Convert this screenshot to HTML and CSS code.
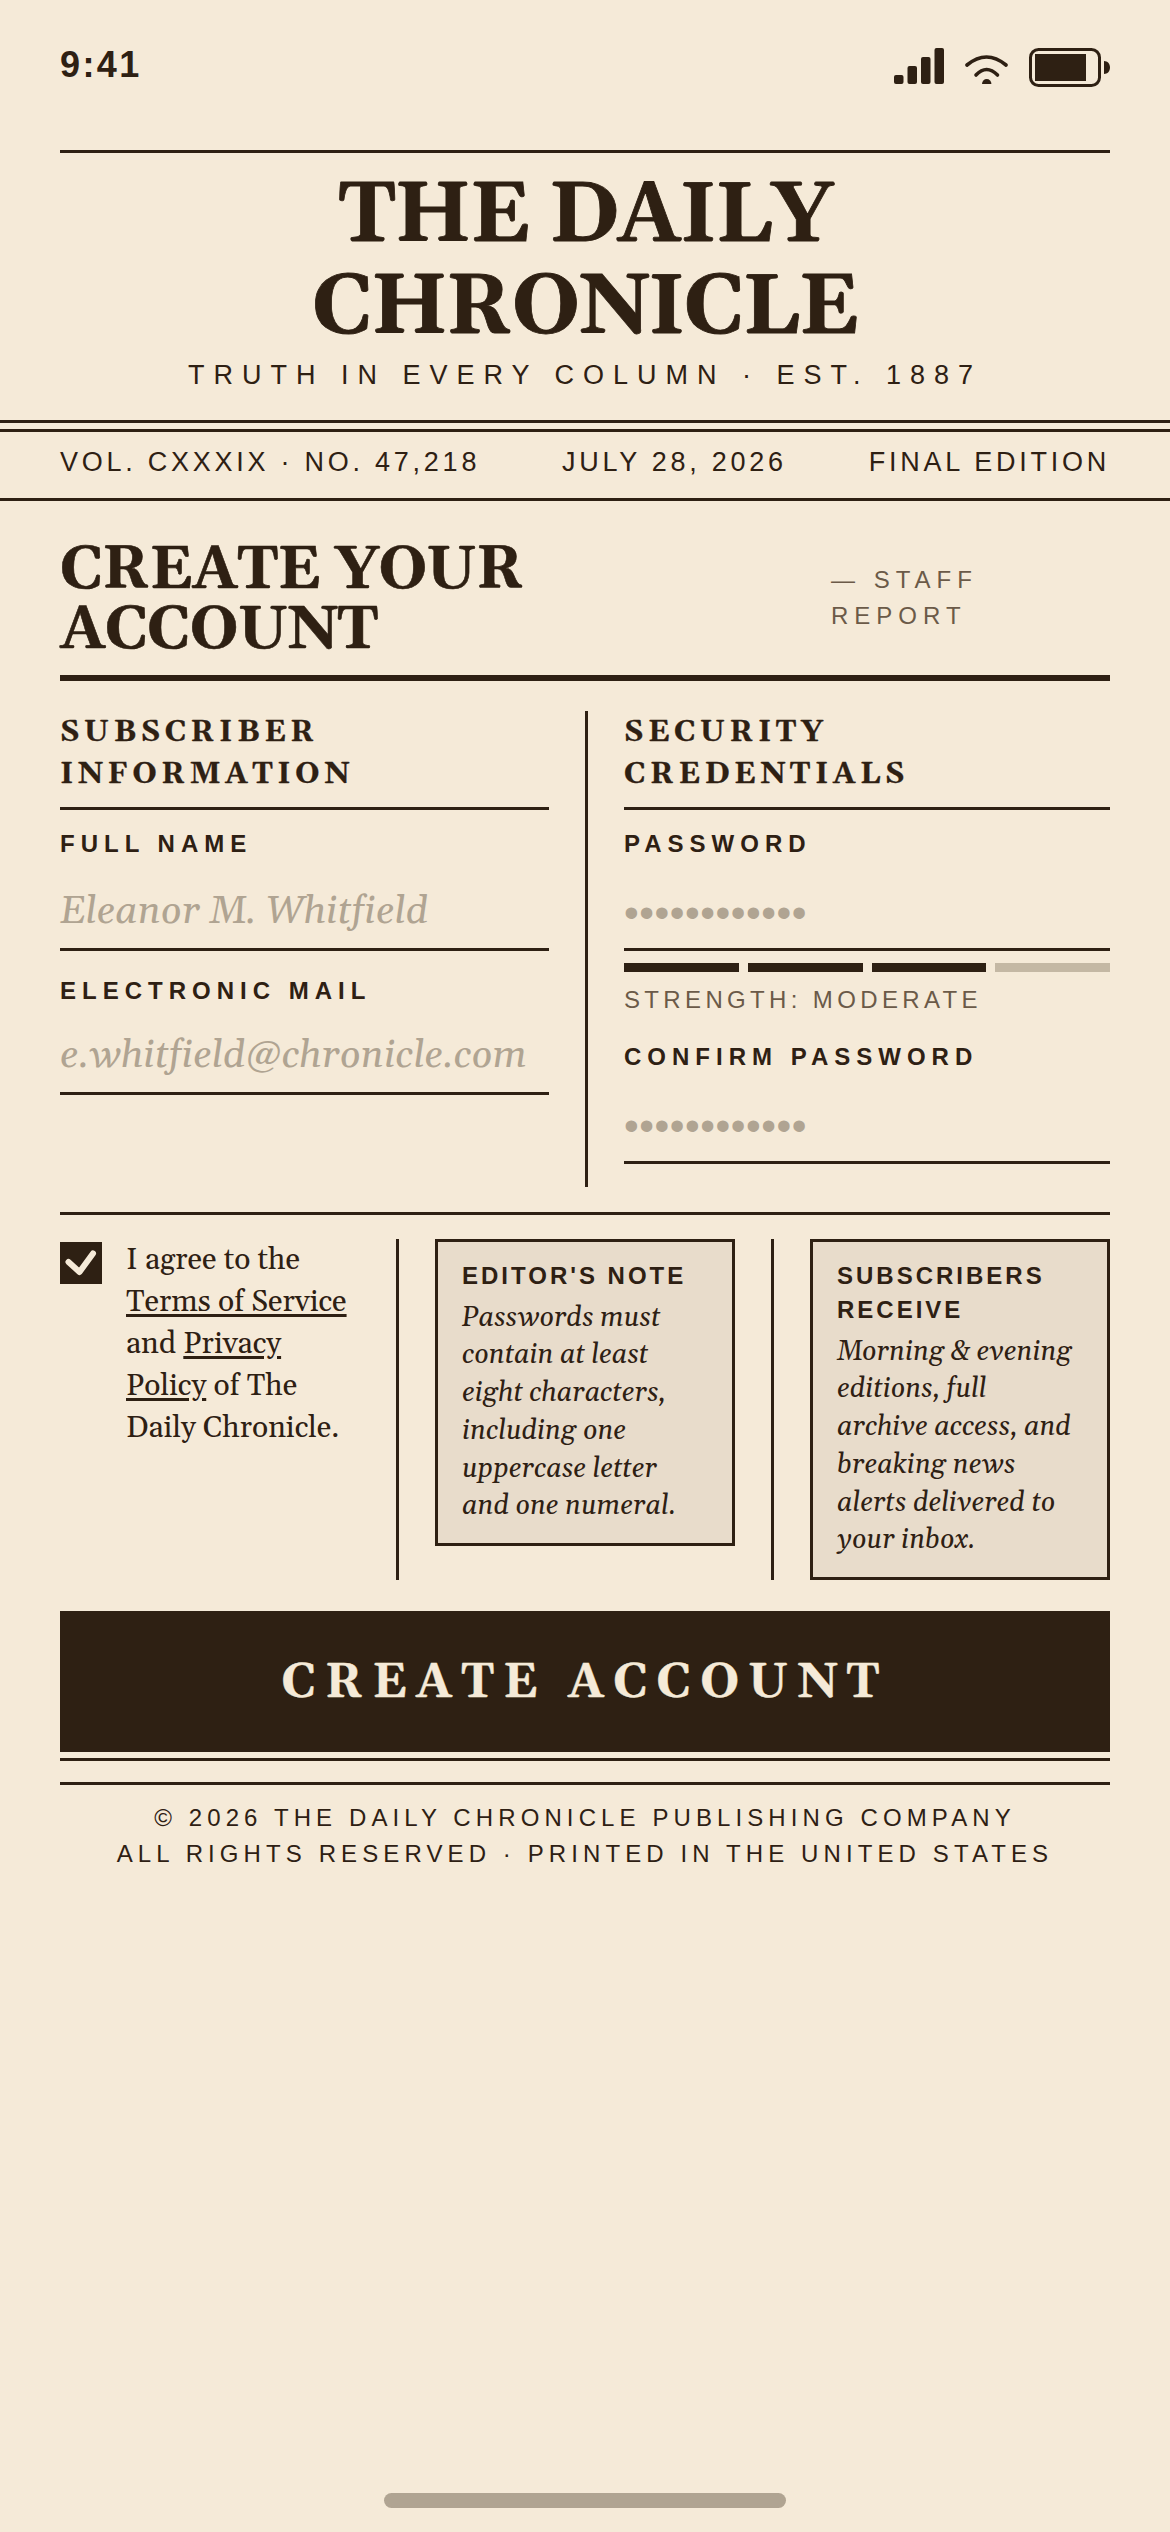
FILE: index.html
```html
<!DOCTYPE html>
<html lang="en">
<head>
<meta charset="utf-8">
<title>The Daily Chronicle</title>
<link rel="stylesheet" href="styles.css">
</head>
<body>
<div class="page">
  <div class="status">
    <span class="time">9:41</span>
    <div class="status-icons">
      <svg class="ic-signal" width="51" height="36" viewBox="0 0 51 36"><rect x="0" y="27" width="9.500" height="9" rx="2"/><rect x="13.500" y="18" width="9.500" height="18" rx="2"/><rect x="27" y="9" width="9.500" height="27" rx="2"/><rect x="40.500" y="0" width="9.500" height="36" rx="2"/></svg>
      <svg class="ic-wifi" width="43" height="30" viewBox="0 0 43 30"><path class="arc" d="M2 10Q21.500 -6 41 10"/><path class="arc" d="M11 20Q21.500 9 32.500 20"/><path d="M17 29a4.700 5 0 0 1 9.400 0z"/></svg>
      <svg class="ic-batt" width="81" height="39" viewBox="0 0 81 39"><rect class="shell" x="1.500" y="1.500" width="69" height="36" rx="8"/><rect x="6" y="6" width="51" height="27"/><path d="M75 13c3.500 0 6 2.800 6 6.500s-2.500 6.500-6 6.500z"/></svg>
    </div>
  </div>

  <div class="masthead-band">
    <header class="masthead">
      <h1 class="title">THE DAILY CHRONICLE</h1>
      <p class="tagline">TRUTH IN EVERY COLUMN · EST. 1887</p>
    </header>
  </div>

  <div class="dateline">
    <span>VOL. CXXXIX · NO. 47,218</span>
    <span>JULY 28, 2026</span>
    <span>FINAL EDITION</span>
  </div>

  <main class="content">
    <div class="headline">
      <h2 class="headline-title">CREATE YOUR ACCOUNT</h2>
      <p class="headline-by">— STAFF REPORT</p>
    </div>

    <div class="form-grid">
      <section class="form-col">
        <h3 class="section-title">SUBSCRIBER INFORMATION</h3>
        <div class="field">
          <label class="label">FULL NAME</label>
          <div class="input input-text">Eleanor M. Whitfield</div>
        </div>
        <div class="field">
          <label class="label">ELECTRONIC MAIL</label>
          <div class="input input-text input-short">e.whitfield@chronicle.com</div>
        </div>
      </section>
      <div class="vline"></div>
      <section class="form-col form-col-last">
        <h3 class="section-title">SECURITY CREDENTIALS</h3>
        <div class="field">
          <label class="label">PASSWORD</label>
          <div class="input input-dots">••••••••••••</div>
          <div class="strength">
            <span class="seg"></span><span class="seg"></span><span class="seg"></span><span class="seg seg-off"></span>
          </div>
          <p class="strength-text">STRENGTH: MODERATE</p>
        </div>
        <div class="field">
          <label class="label">CONFIRM PASSWORD</label>
          <div class="input input-dots">••••••••••••</div>
        </div>
      </section>
    </div>

    <div class="lower">
      <div class="agree">
        <span class="check"><svg width="42" height="42" viewBox="0 0 42 42"><path d="M8.500 20L19.500 30L33 11.500"/></svg></span>
        <p class="agree-text">I agree to the <a href="#">Terms of Service</a> and <a href="#">Privacy Policy</a> of The Daily Chronicle.</p>
      </div>
      <div class="vline"></div>
      <aside class="note">
        <h4 class="note-title">EDITOR'S NOTE</h4>
        <p class="note-body">Passwords must contain at least eight characters, including one uppercase letter and one numeral.</p>
      </aside>
      <div class="vline"></div>
      <aside class="note">
        <h4 class="note-title">SUBSCRIBERS RECEIVE</h4>
        <p class="note-body">Morning &amp; evening editions, full archive access, and breaking news alerts delivered to your inbox.</p>
      </aside>
    </div>

    <button class="submit" type="button">CREATE ACCOUNT</button>

    <footer class="footer">
      <div class="footer-text">
        <p>© 2026 THE DAILY CHRONICLE PUBLISHING COMPANY</p>
        <p>ALL RIGHTS RESERVED · PRINTED IN THE UNITED STATES</p>
      </div>
    </footer>
  </main>

  <div class="home-indicator"></div>
</div>
</body>
</html>
```
FILE: styles.css
```css
* { box-sizing: border-box; }
html, body { margin: 0; padding: 0; }
body { background: #f5ead8; color: #2e2013; font-family: "Liberation Sans", Arial, sans-serif; }
h1, h2, h3, h4, p { margin: 0; font-weight: inherit; }

.page { width: 1170px; height: 2532px; background: #f5ead8; position: relative; overflow: hidden; }

.status { height: 150px; padding: 48px 60px 0; display: flex; justify-content: space-between; align-items: flex-start; }
.time { font-size: 36px; font-weight: 700; line-height: 33px; letter-spacing: 2.4px; }
.status-icons { display: flex; align-items: flex-start; gap: 20px; }
.status-icons svg { display: block; fill: #2e2013; }
.ic-wifi { margin-top: 7px; margin-right: 1px; }
.ic-wifi .arc { fill: none; stroke: #2e2013; stroke-width: 3.6; stroke-linecap: round; }
.ic-batt .shell { fill: none; stroke: #2e2013; stroke-width: 3; }

.masthead-band { border-bottom: 3px solid #2e2013; }
.masthead { margin: 0 60px; border-top: 3px solid #2e2013; padding-top: 18px; text-align: center; height: 270px; }
.title { font-family: Gelasio, Georgia, "Liberation Serif", serif; font-size: 84px; font-weight: 700; line-height: 92.4px; letter-spacing: -1.5px; -webkit-text-stroke: 0.8px #2e2013; }
.tagline { font-size: 27px; letter-spacing: 9px; line-height: 36px; margin-top: 1px; }

.dateline { margin-top: 6px; border-top: 3px solid #2e2013; border-bottom: 3px solid #2e2013; padding: 12px 60px 18px; display: flex; justify-content: space-between; font-size: 27px; line-height: 36px; letter-spacing: 3.75px; }

.content { padding: 40px 60px 0; }

.headline { display: flex; align-items: center; border-bottom: 6px solid #2e2013; padding-bottom: 14px; }
.headline-title { width: 771px; font-family: Gelasio, Georgia, "Liberation Serif", serif; font-size: 60px; font-weight: 700; line-height: 60px; letter-spacing: -0.6px; flex: none; -webkit-text-stroke: 0.6px #2e2013; }
.headline-by { width: 170px; font-size: 24px; letter-spacing: 6px; line-height: 36px; color: #6b5a48; margin-bottom: 6px; }

.form-grid { display: grid; grid-template-columns: 489px 3px 1fr; column-gap: 36px; margin-top: 30px; }
.form-col-last { padding-bottom: 23px; }
.vline { background: #2e2013; width: 3px; }
.section-title { font-family: Gelasio, Georgia, "Liberation Serif", serif; font-size: 30px; font-weight: 700; letter-spacing: 4.5px; line-height: 42px; padding-bottom: 12px; border-bottom: 3px solid #2e2013; -webkit-text-stroke: 0.3px #2e2013; }
.label { display: block; font-size: 24px; font-weight: 700; letter-spacing: 6px; line-height: 30px; padding-top: 1px; box-sizing: content-box; }
.field { margin-top: 18px; }
.field + .field { margin-top: 24px; }
.input { border-bottom: 3px solid #2e2013; height: 92px; display: flex; align-items: flex-end; }
.input-short { height: 89px; }
.input-text { font-family: Gelasio, Georgia, "Liberation Serif", serif; font-style: italic; font-size: 39px; letter-spacing: 0.1px; line-height: 48px; padding-bottom: 12px; color: #b0a492; }
.input-dots { font-size: 42px; line-height: 48px; letter-spacing: 0.55px; color: #b0a492; padding-bottom: 11px; }
.strength { display: flex; gap: 9px; margin-top: 12px; }
.seg { flex: 1; height: 9px; background: #2e2013; }
.seg-off { background: #c4b8a4; }
.strength-text { font-size: 24px; letter-spacing: 4.35px; color: #6b5a48; line-height: 35px; margin-top: 10px; }

.lower { display: grid; grid-template-columns: 1fr 3px 1fr 3px 1fr; column-gap: 36px; align-items: start; margin-top: 25px; border-top: 3px solid #2e2013; padding-top: 24px; }
.lower .vline { align-self: stretch; }
.agree { display: flex; gap: 24px; align-items: flex-start; }
.check { width: 42px; height: 42px; background: #2e2013; flex: none; margin-top: 3px; }
.check svg { display: block; fill: none; stroke: #f5ead8; stroke-width: 6; stroke-linecap: round; stroke-linejoin: round; }
.agree-text { font-family: Gelasio, Georgia, "Liberation Serif", serif; font-size: 30px; line-height: 42px; }
.agree-text a { color: inherit; text-decoration: underline; text-decoration-thickness: 3px; text-underline-offset: 3px; }
.note { border: 3px solid #2e2013; background: #e8dccb; padding: 17px 24px; }
.note-title { font-size: 24px; font-weight: 700; letter-spacing: 3px; line-height: 34px; }
.note-body { font-family: Gelasio, Georgia, "Liberation Serif", serif; font-style: italic; font-size: 27px; line-height: 37.8px; margin-top: 6.5px; }

.submit { display: block; width: 100%; height: 141px; margin-top: 30.7px; border: 0; padding: 3px 0 0; background: #2e2013; color: #f5ead8; font-family: Gelasio, Georgia, "Liberation Serif", serif; font-weight: 700; font-size: 48px; letter-spacing: 9px; -webkit-text-stroke: 0.4px #f5ead8; }

.footer { margin-top: 6px; border-top: 3px solid #2e2013; padding-top: 21px; }
.footer-text { border-top: 3px solid #2e2013; padding-top: 15px; text-align: center; font-size: 24px; letter-spacing: 5.1px; line-height: 36px; }

.home-indicator { position: absolute; left: 384px; bottom: 24px; width: 402px; height: 15px; border-radius: 8px; background: #b0a492; }
```
